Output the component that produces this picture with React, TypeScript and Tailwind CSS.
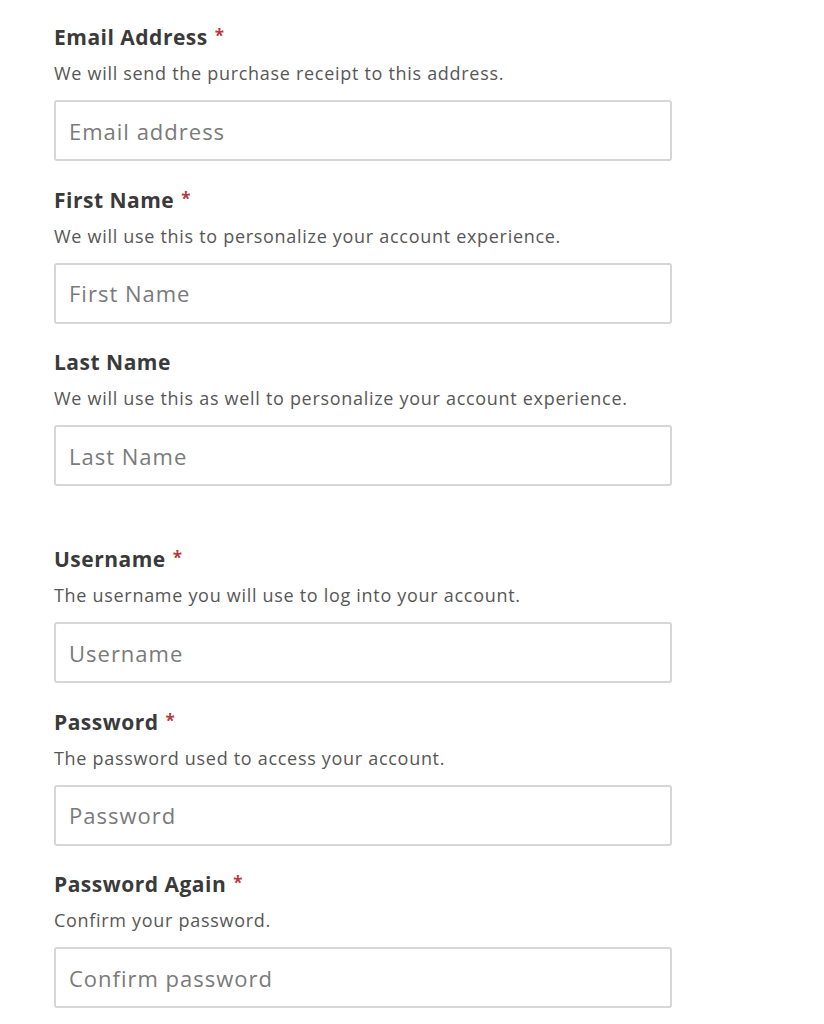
const fields = [
  {
    id: "email",
    label: "Email Address",
    required: true,
    help: "We will send the purchase receipt to this address.",
    placeholder: "Email address",
    type: "email",
  },
  {
    id: "first",
    label: "First Name",
    required: true,
    help: "We will use this to personalize your account experience.",
    placeholder: "First Name",
    type: "text",
  },
  {
    id: "last",
    label: "Last Name",
    required: false,
    help: "We will use this as well to personalize your account experience.",
    placeholder: "Last Name",
    type: "text",
  },
];

const accountFields = [
  {
    id: "username",
    label: "Username",
    required: true,
    help: "The username you will use to log into your account.",
    placeholder: "Username",
    type: "text",
  },
  {
    id: "password",
    label: "Password",
    required: true,
    help: "The password used to access your account.",
    placeholder: "Password",
    type: "password",
  },
  {
    id: "password2",
    label: "Password Again",
    required: true,
    help: "Confirm your password.",
    placeholder: "Confirm password",
    type: "password",
  },
];

type Field = (typeof fields)[number];

function FormField({ field }: { field: Field }) {
  return (
    <div className="flex flex-col">
      <label
        htmlFor={field.id}
        className="h-[30px] text-[21px] leading-[30px] font-bold tracking-[0.5px] text-[#3a3a3a]"
      >
        {field.label}
        {field.required && (
          <span className="ml-[7px] align-[3px] text-[17px] leading-none text-[#b83b3b]">*</span>
        )}
      </label>
      <p className="mt-[8px] text-[18px] leading-[26px] tracking-[0.7px] text-[#575757]">
        {field.help}
      </p>
      <input
        id={field.id}
        type={field.type}
        placeholder={field.placeholder}
        className="mt-[14px] h-[61px] w-[618px] rounded-[3px] border-2 border-[#d6d6d6] bg-white px-[13px] text-[22px] tracking-[1px] text-[#333] outline-none placeholder:text-[#7a7a7a]"
      />
    </div>
  );
}

export default function App() {
  return (
    <div className="min-h-screen bg-white pl-[54px] pt-[22px] font-['Open_Sans',sans-serif]">
      <div className="flex flex-col gap-[23.5px]">
        {fields.map((f) => (
          <FormField key={f.id} field={f} />
        ))}
      </div>
      <div className="mt-[58px] flex flex-col gap-[23.5px]">
        {accountFields.map((f) => (
          <FormField key={f.id} field={f} />
        ))}
      </div>
    </div>
  );
}
